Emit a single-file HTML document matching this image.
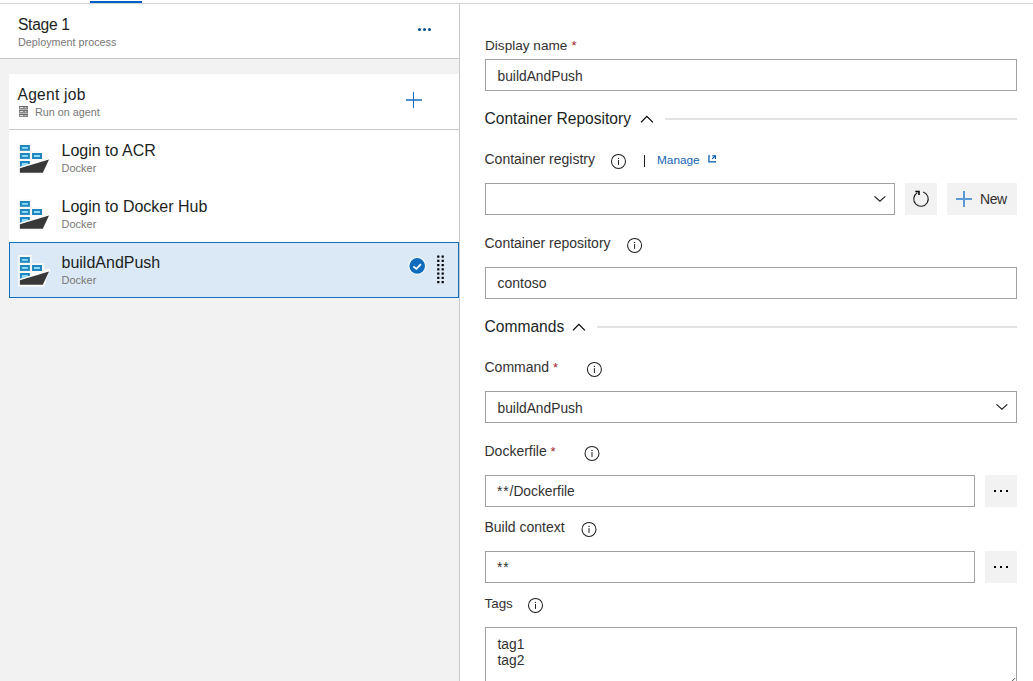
<!DOCTYPE html>
<html><head><meta charset="utf-8"><style>
html,body{margin:0;padding:0;}
body{width:1033px;height:681px;overflow:hidden;position:relative;background:#fff;font-family:"Liberation Sans",sans-serif;}
.abs{position:absolute;}
.t{position:absolute;white-space:nowrap;line-height:1;}
.dot{width:3.2px;height:3.2px;border-radius:50%;background:#004e8c;}
.inp{border:1px solid #a0a0a0;background:#fff;}
.btn{background:#f2f2f2;}
</style></head><body>

<!-- top bar -->
<div class="abs" style="left:0;top:3px;width:1033px;height:1px;background:#d6d6d6"></div>
<div class="abs" style="left:90px;top:1px;width:52px;height:2px;background:#005fc4"></div>
<!-- left panel -->
<div class="abs" style="left:0;top:4px;width:459px;height:677px;background:#f2f2f2"></div>
<div class="abs" style="left:0;top:4px;width:459px;height:54px;background:#fff"></div>
<div class="abs" style="left:0;top:58px;width:459px;height:1px;background:#c8c8c8"></div>
<div class="abs" style="left:9px;top:74px;width:450px;height:168px;background:#fff"></div>
<div class="abs" style="left:9px;top:129px;width:450px;height:1px;background:#c8c8c8"></div>
<div class="abs" style="left:9px;top:242px;width:448px;height:54px;background:#dbe9f7;border:1px solid #106ebe"></div>
<div class="abs" style="left:459px;top:4px;width:1px;height:677px;background:#c8c8c8"></div>
<!-- ellipsis top -->
<div class="abs dot" style="left:417.7px;top:27.9px"></div>
<div class="abs dot" style="left:422.7px;top:27.9px"></div>
<div class="abs dot" style="left:427.8px;top:27.9px"></div>
<!-- plus -->
<div class="abs" style="left:413px;top:92px;width:1.3px;height:16px;background:#0f6cbd"></div>
<div class="abs" style="left:405.5px;top:99.4px;width:16.5px;height:1.3px;background:#0f6cbd;opacity:.75"></div>
<!-- server icon -->
<svg class="abs" style="left:18px;top:105px;shape-rendering:crispEdges" width="12" height="13" viewBox="0 0 12 13"><rect x="1" y="1" width="9" height="1" fill="#6e6e6e"/><rect x="1" y="2" width="9" height="2" fill="#8c8c8c"/><rect x="2" y="2" width="3" height="1" fill="#dedede"/><rect x="7" y="2" width="1" height="1" fill="#d0d0d0"/><rect x="1" y="4" width="9" height="1" fill="#b4b4b4"/><rect x="1" y="5" width="9" height="1" fill="#6e6e6e"/><rect x="1" y="6" width="9" height="2" fill="#8c8c8c"/><rect x="2" y="6" width="3" height="1" fill="#dedede"/><rect x="7" y="6" width="1" height="1" fill="#d0d0d0"/><rect x="1" y="8" width="9" height="1" fill="#b4b4b4"/><rect x="1" y="9" width="9" height="1" fill="#6e6e6e"/><rect x="1" y="10" width="9" height="2" fill="#8c8c8c"/><rect x="2" y="10" width="3" height="1" fill="#dedede"/><rect x="7" y="10" width="1" height="1" fill="#d0d0d0"/></svg>
<div class="abs" style="left:18px;top:143px;width:32px;height:32px"><svg width="32" height="32" viewBox="0 0 32 32">
<path d="M0.2 0 H13.7 V8.2 H26 V14.4 L32 13.6 L26.2 31.7 H0.2 Z" fill="#fbfaf8"/>
<rect x="1.9" y="2" width="10" height="5.8" fill="#2385be"/>
<rect x="3.9" y="4" width="6" height="1.8" fill="#8ddcf7"/>
<rect x="1.9" y="10" width="10" height="5.9" fill="#2385be"/>
<rect x="3.9" y="12" width="6" height="1.9" fill="#8ddcf7"/>
<rect x="14" y="10" width="10" height="6" fill="#2385be"/>
<rect x="16" y="12" width="6" height="2" fill="#8ddcf7"/>
<path d="M1.9 17.9 H11.9 V21.2 L1.9 24.3 Z" fill="#2385be"/>
<path d="M3.9 19.9 H9.9 V21.8 L3.9 23.6 Z" fill="#8ddcf7"/>
<path d="M0.2 24.2 L32 14.8 V17 L1.9 26.5 Z" fill="#fff"/>
<path d="M1.9 25.3 L31 16.4 L24.8 29.7 H1.9 Z" fill="#383838"/>
</svg></div><div class="abs" style="left:18px;top:199px;width:32px;height:32px"><svg width="32" height="32" viewBox="0 0 32 32">
<path d="M0.2 0 H13.7 V8.2 H26 V14.4 L32 13.6 L26.2 31.7 H0.2 Z" fill="#fbfaf8"/>
<rect x="1.9" y="2" width="10" height="5.8" fill="#2385be"/>
<rect x="3.9" y="4" width="6" height="1.8" fill="#8ddcf7"/>
<rect x="1.9" y="10" width="10" height="5.9" fill="#2385be"/>
<rect x="3.9" y="12" width="6" height="1.9" fill="#8ddcf7"/>
<rect x="14" y="10" width="10" height="6" fill="#2385be"/>
<rect x="16" y="12" width="6" height="2" fill="#8ddcf7"/>
<path d="M1.9 17.9 H11.9 V21.2 L1.9 24.3 Z" fill="#2385be"/>
<path d="M3.9 19.9 H9.9 V21.8 L3.9 23.6 Z" fill="#8ddcf7"/>
<path d="M0.2 24.2 L32 14.8 V17 L1.9 26.5 Z" fill="#fff"/>
<path d="M1.9 25.3 L31 16.4 L24.8 29.7 H1.9 Z" fill="#383838"/>
</svg></div><div class="abs" style="left:18px;top:255px;width:32px;height:32px"><svg width="32" height="32" viewBox="0 0 32 32">
<path d="M0.2 0 H13.7 V8.2 H26 V14.4 L32 13.6 L26.2 31.7 H0.2 Z" fill="#fbfaf8"/>
<rect x="1.9" y="2" width="10" height="5.8" fill="#2385be"/>
<rect x="3.9" y="4" width="6" height="1.8" fill="#8ddcf7"/>
<rect x="1.9" y="10" width="10" height="5.9" fill="#2385be"/>
<rect x="3.9" y="12" width="6" height="1.9" fill="#8ddcf7"/>
<rect x="14" y="10" width="10" height="6" fill="#2385be"/>
<rect x="16" y="12" width="6" height="2" fill="#8ddcf7"/>
<path d="M1.9 17.9 H11.9 V21.2 L1.9 24.3 Z" fill="#2385be"/>
<path d="M3.9 19.9 H9.9 V21.8 L3.9 23.6 Z" fill="#8ddcf7"/>
<path d="M0.2 24.2 L32 14.8 V17 L1.9 26.5 Z" fill="#fff"/>
<path d="M1.9 25.3 L31 16.4 L24.8 29.7 H1.9 Z" fill="#383838"/>
</svg></div>
<!-- check -->
<svg class="abs" style="left:408px;top:257px" width="18" height="18" viewBox="0 0 18 18">
<circle cx="9.2" cy="8.9" r="8.8" fill="#fff"/>
<circle cx="9.2" cy="8.9" r="7.8" fill="#0f6cbd"/>
<path d="M5.3 9.5 L8.4 11.8 L12.9 7.1" fill="none" stroke="#fff" stroke-width="1.7"/>
</svg>
<!-- gripper -->
<svg class="abs" style="left:436px;top:254px" width="10" height="32" viewBox="0 0 10 32"><rect x="1.2" y="1.50" width="2.2" height="2.2" fill="#000"/><rect x="5.6" y="1.50" width="2.2" height="2.2" fill="#000"/><rect x="1.2" y="5.75" width="2.2" height="2.2" fill="#000"/><rect x="5.6" y="5.75" width="2.2" height="2.2" fill="#000"/><rect x="1.2" y="10.00" width="2.2" height="2.2" fill="#000"/><rect x="5.6" y="10.00" width="2.2" height="2.2" fill="#000"/><rect x="1.2" y="14.25" width="2.2" height="2.2" fill="#000"/><rect x="5.6" y="14.25" width="2.2" height="2.2" fill="#000"/><rect x="1.2" y="18.50" width="2.2" height="2.2" fill="#000"/><rect x="5.6" y="18.50" width="2.2" height="2.2" fill="#000"/><rect x="1.2" y="22.75" width="2.2" height="2.2" fill="#000"/><rect x="5.6" y="22.75" width="2.2" height="2.2" fill="#000"/><rect x="1.2" y="27.00" width="2.2" height="2.2" fill="#000"/><rect x="5.6" y="27.00" width="2.2" height="2.2" fill="#000"/></svg>
<!-- RIGHT PANEL -->
<div class="abs inp" style="left:485px;top:59px;width:530px;height:30px"></div>
<div class="abs" style="left:665px;top:118px;width:352px;height:2px;background:#e3e3e3"></div>
<svg class="abs" style="left:638px;top:114px" width="16" height="12" viewBox="0 0 16 12"><path d="M3.00 8.40 L8.85 2.35 L14.90 8.40" fill="none" stroke="#000" stroke-width="1.2"/></svg>
<svg class="abs" style="left:610px;top:153px" width="18" height="18" viewBox="0 0 18 18"><circle cx="8.50" cy="8.40" r="7" fill="none" stroke="#201f1e" stroke-width="1.05"/><rect x="8.00" y="7.10" width="1" height="4.8" fill="#201f1e"/><circle cx="8.50" cy="5.40" r="0.7" fill="#201f1e"/></svg>
<div class="abs" style="left:644px;top:155px;width:1px;height:12px;background:#201f1e"></div>
<svg class="abs" style="left:703px;top:150px" width="18" height="18" viewBox="0 0 18 18">
<path d="M6.9 5.9 H5.9 V11.8 H12.3 V10.9" fill="none" stroke="#0b5cad" stroke-width="1.25"/>
<path d="M9.3 5.9 H12.4 V8.9" fill="none" stroke="#0b5cad" stroke-width="1.25"/>
<path d="M9.2 8.9 L12.3 5.9" fill="none" stroke="#0b5cad" stroke-width="1.25"/>
</svg>
<div class="abs inp" style="left:485px;top:183px;width:408px;height:30px"></div>
<svg class="abs" style="left:871px;top:193px" width="16" height="12" viewBox="0 0 16 12"><path d="M3.50 3.35 L8.90 8.10 L14.30 3.35" fill="none" stroke="#201f1e" stroke-width="1.2"/></svg>
<div class="abs btn" style="left:905px;top:183px;width:32px;height:32px"></div>
<svg class="abs" style="left:905px;top:183px" width="32" height="32" viewBox="0 0 32 32">
<path d="M18.12 9.07 A7.25 7.25 0 1 1 12.27 9.79" fill="none" stroke="#201f1e" stroke-width="1.1"/>
<path d="M10.3 8.6 H14.0 V11.9" fill="none" stroke="#000" stroke-width="1.5"/>
</svg>
<div class="abs btn" style="left:947px;top:183px;width:70px;height:32px"></div>
<div class="abs" style="left:963.3px;top:191px;width:1.4px;height:16px;background:#5c9ad6"></div>
<div class="abs" style="left:956px;top:198.3px;width:16px;height:1.4px;background:#5c9ad6"></div>
<svg class="abs" style="left:626px;top:237px" width="18" height="18" viewBox="0 0 18 18"><circle cx="8.60" cy="8.40" r="7" fill="none" stroke="#201f1e" stroke-width="1.05"/><rect x="8.10" y="7.10" width="1" height="4.8" fill="#201f1e"/><circle cx="8.60" cy="5.40" r="0.7" fill="#201f1e"/></svg>
<div class="abs inp" style="left:485px;top:267px;width:530px;height:30px"></div>
<div class="abs" style="left:597px;top:326px;width:420px;height:2px;background:#e3e3e3"></div>
<svg class="abs" style="left:570px;top:322px" width="16" height="12" viewBox="0 0 16 12"><path d="M3.00 8.40 L8.85 2.35 L14.90 8.40" fill="none" stroke="#000" stroke-width="1.2"/></svg>
<svg class="abs" style="left:586px;top:361px" width="18" height="18" viewBox="0 0 18 18"><circle cx="8.40" cy="8.40" r="7" fill="none" stroke="#201f1e" stroke-width="1.05"/><rect x="7.90" y="7.10" width="1" height="4.8" fill="#201f1e"/><circle cx="8.40" cy="5.40" r="0.7" fill="#201f1e"/></svg>
<div class="abs inp" style="left:485px;top:391px;width:530px;height:30px"></div>
<svg class="abs" style="left:993px;top:401px" width="16" height="12" viewBox="0 0 16 12"><path d="M3.50 3.35 L8.90 8.10 L14.30 3.35" fill="none" stroke="#201f1e" stroke-width="1.2"/></svg>
<svg class="abs" style="left:584px;top:445px" width="18" height="18" viewBox="0 0 18 18"><circle cx="8.00" cy="8.40" r="7" fill="none" stroke="#201f1e" stroke-width="1.05"/><rect x="7.50" y="7.10" width="1" height="4.8" fill="#201f1e"/><circle cx="8.00" cy="5.40" r="0.7" fill="#201f1e"/></svg>
<div class="abs inp" style="left:485px;top:475px;width:488px;height:30px"></div>
<div class="abs btn" style="left:985px;top:475px;width:32px;height:32px"></div><div class="abs" style="left:994px;top:490px;width:2px;height:2px;background:#000"></div><div class="abs" style="left:1000px;top:490px;width:2px;height:2px;background:#000"></div><div class="abs" style="left:1006px;top:490px;width:2px;height:2px;background:#000"></div>
<svg class="abs" style="left:581px;top:521px" width="18" height="18" viewBox="0 0 18 18"><circle cx="8.00" cy="8.40" r="7" fill="none" stroke="#201f1e" stroke-width="1.05"/><rect x="7.50" y="7.10" width="1" height="4.8" fill="#201f1e"/><circle cx="8.00" cy="5.40" r="0.7" fill="#201f1e"/></svg>
<div class="abs inp" style="left:485px;top:551px;width:488px;height:30px"></div>
<div class="abs btn" style="left:985px;top:551px;width:32px;height:32px"></div><div class="abs" style="left:994px;top:566px;width:2px;height:2px;background:#000"></div><div class="abs" style="left:1000px;top:566px;width:2px;height:2px;background:#000"></div><div class="abs" style="left:1006px;top:566px;width:2px;height:2px;background:#000"></div>
<svg class="abs" style="left:527px;top:597px" width="18" height="18" viewBox="0 0 18 18"><circle cx="8.50" cy="8.40" r="7" fill="none" stroke="#201f1e" stroke-width="1.05"/><rect x="8.00" y="7.10" width="1" height="4.8" fill="#201f1e"/><circle cx="8.50" cy="5.40" r="0.7" fill="#201f1e"/></svg>
<div class="abs inp" style="left:485px;top:627px;width:530px;height:80px"></div>
<svg class="abs" style="left:1008px;top:674px" width="8" height="7" viewBox="0 0 8 7"><path d="M3.6 7.6 L7 4.2" stroke="#444" stroke-width="1"/></svg>

<div class="t" style="left:18.00px;top:17px;font-size:15.6px;color:#201f1e;letter-spacing:-0.3px;">Stage 1</div>
<div class="t" style="left:18.00px;top:37px;font-size:10.8px;color:#797775;">Deployment process</div>
<div class="t" style="left:17.50px;top:87px;font-size:15.6px;color:#201f1e;letter-spacing:0.25px;">Agent job</div>
<div class="t" style="left:35.00px;top:107px;font-size:10.8px;color:#797775;">Run on agent</div>
<div class="t" style="left:61.50px;top:143px;font-size:16px;color:#201f1e;">Login to ACR</div>
<div class="t" style="left:61.50px;top:163px;font-size:11px;color:#797775;">Docker</div>
<div class="t" style="left:61.50px;top:199px;font-size:16px;color:#201f1e;">Login to Docker Hub</div>
<div class="t" style="left:61.50px;top:219px;font-size:11px;color:#797775;">Docker</div>
<div class="t" style="left:61.50px;top:255px;font-size:16px;color:#201f1e;">buildAndPush</div>
<div class="t" style="left:61.50px;top:275px;font-size:11px;color:#797775;">Docker</div>
<div class="t" style="left:485.00px;top:39px;font-size:13.6px;color:#323130;">Display name</div>
<div class="t" style="left:571.50px;top:39px;font-size:13px;color:#a4262c;">*</div>
<div class="t" style="left:497.50px;top:70px;font-size:13.8px;color:#323130;">buildAndPush</div>
<div class="t" style="left:484.50px;top:111px;font-size:15.6px;color:#201f1e;">Container Repository</div>
<div class="t" style="left:484.50px;top:152px;font-size:14px;color:#323130;">Container registry</div>
<div class="t" style="left:657.00px;top:155px;font-size:11.8px;color:#1464b4;">Manage</div>
<div class="t" style="left:980.00px;top:192px;font-size:14px;color:#323130;letter-spacing:-0.45px;">New</div>
<div class="t" style="left:484.50px;top:236px;font-size:14px;color:#323130;">Container repository</div>
<div class="t" style="left:497.50px;top:276px;font-size:14px;color:#323130;">contoso</div>
<div class="t" style="left:484.50px;top:319px;font-size:15.6px;color:#201f1e;">Commands</div>
<div class="t" style="left:484.50px;top:360px;font-size:14px;color:#323130;">Command</div>
<div class="t" style="left:553.00px;top:361px;font-size:13px;color:#a4262c;">*</div>
<div class="t" style="left:497.50px;top:402px;font-size:13.8px;color:#323130;">buildAndPush</div>
<div class="t" style="left:484.50px;top:444px;font-size:14px;color:#323130;">Dockerfile</div>
<div class="t" style="left:550.50px;top:445px;font-size:13px;color:#a4262c;">*</div>
<div class="t" style="left:497.00px;top:485px;font-size:13.8px;color:#323130;"><span style="letter-spacing:0.9px">**</span>/Dockerfile</div>
<div class="t" style="left:484.50px;top:520px;font-size:14px;color:#323130;">Build context</div>
<div class="t" style="left:497.00px;top:561px;font-size:13.8px;color:#323130;"><span style="letter-spacing:0.9px">**</span></div>
<div class="t" style="left:484.50px;top:597px;font-size:13.4px;color:#323130;">Tags</div>
<div class="t" style="left:497.50px;top:638px;font-size:13.8px;color:#323130;">tag1</div>
<div class="t" style="left:497.50px;top:654px;font-size:13.8px;color:#323130;">tag2</div>
</body></html>
